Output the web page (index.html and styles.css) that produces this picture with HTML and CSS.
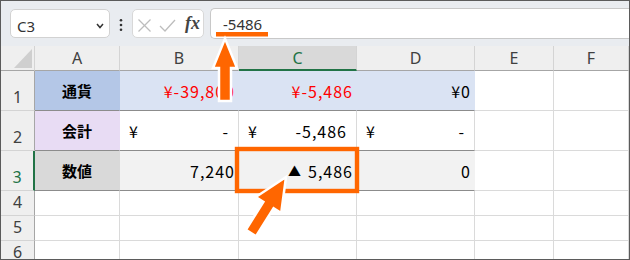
FILE: index.html
```html
<!DOCTYPE html>
<html lang="ja">
<head>
    <meta charset="UTF-8">
    <title>表示形式の比較</title>
    <link rel="stylesheet" href="styles.css">
</head>
<body>
    <div class="frame">
        <div class="sheet">
            <!-- Name box, buttons and formula bar -->
            <div class="toolbar">
                <div class="namebox">
                    <span>C3</span>
                    <svg width="8" height="6" viewBox="0 0 8 6"><polyline points="1,1 4,4.5 7,1" fill="none" stroke="#333" stroke-width="1.5"/></svg>
                </div>
                <div class="menu-dots">
                    <svg width="4" height="29" viewBox="0 0 4 29">
                        <circle cx="2" cy="11.3" r="1.3" fill="#333"/>
                        <circle cx="2" cy="16" r="1.3" fill="#333"/>
                        <circle cx="2" cy="20.7" r="1.3" fill="#333"/>
                    </svg>
                </div>
                <div class="fx-buttons">
                    <svg width="44" height="27" viewBox="0 0 44 27">
                        <line x1="5.5" y1="9.5" x2="17.5" y2="21.5" stroke="#bdbdbd" stroke-width="1.3"/>
                        <line x1="17.5" y1="9.5" x2="5.5" y2="21.5" stroke="#bdbdbd" stroke-width="1.3"/>
                        <polyline points="27,16 32,21 42,10" fill="none" stroke="#bdbdbd" stroke-width="1.3"/>
                    </svg>
                    <span class="fx">fx</span>
                </div>
                <div class="formula">-5486</div>
            </div>

            <!-- Worksheet -->
            <div class="grid">
                <div class="corner">
                    <svg width="33" height="24" viewBox="0 0 33 24"><polygon points="13,22 31,22 31,3" fill="#cfcfcf"/></svg>
                </div>
                <div class="col-head">A</div>
                <div class="col-head">B</div>
                <div class="col-head active">C</div>
                <div class="col-head">D</div>
                <div class="col-head">E</div>
                <div class="col-head">F</div>

                <div class="row-head">1</div>
                <div class="cell table label currency">通貨</div>
                <div class="cell table num fill-blue red">¥-39,800</div>
                <div class="cell table num fill-blue red">¥-5,486</div>
                <div class="cell table num fill-blue">¥0</div>
                <div class="cell"></div>
                <div class="cell"></div>

                <div class="row-head">2</div>
                <div class="cell table label accounting">会計</div>
                <div class="cell table acct"><span>¥</span><span>-</span></div>
                <div class="cell table acct"><span>¥</span><span>-5,486</span></div>
                <div class="cell table acct"><span>¥</span><span>-</span></div>
                <div class="cell"></div>
                <div class="cell"></div>

                <div class="row-head active">3</div>
                <div class="cell table label number">数値</div>
                <div class="cell table num fill-grey">7,240</div>
                <div class="cell table num fill-grey"><span class="mark">▲</span>5,486</div>
                <div class="cell table num fill-grey">0</div>
                <div class="cell"></div>
                <div class="cell"></div>

                <div class="row-head">4</div>
                <div class="cell"></div><div class="cell"></div><div class="cell"></div>
                <div class="cell"></div><div class="cell"></div><div class="cell"></div>

                <div class="row-head">5</div>
                <div class="cell"></div><div class="cell"></div><div class="cell"></div>
                <div class="cell"></div><div class="cell"></div><div class="cell"></div>

                <div class="row-head">6</div>
                <div class="cell"></div><div class="cell"></div><div class="cell"></div>
                <div class="cell"></div><div class="cell"></div><div class="cell"></div>
            </div>
        </div>

        <!-- Orange call-outs drawn over the sheet -->
        <svg class="overlay" width="630" height="260" viewBox="0 0 630 260">
            <rect x="216" y="32" width="52" height="4.5" fill="#ff6600"/>
            <polygon points="225,38.5 237,68 231,68 231,101 219,101 219,68 213,68" fill="#ff6600" stroke="#fff" stroke-width="2.5"/>
            <rect x="237" y="149" width="120" height="42" fill="none" stroke="#ff6600" stroke-width="4.4"/>
            <polygon points="286,177 281.2,213 273.6,208.2 256.1,236.2 245.9,229.8 263.4,201.8 255.8,197" fill="#ff6600" stroke="#fff" stroke-width="2.5"/>
        </svg>
    </div>
</body>
</html>
```

FILE: styles.css
```css
/* Excel-like sheet with call-outs */
body {
    margin: 0;
}

.frame {
    position: relative;
    width: 630px;
    height: 260px;
}

.sheet {
    box-sizing: border-box;
    width: 630px;
    height: 260px;
    border: 1px solid #5b5b5b;
    overflow: hidden;
    background-color: #fff;
    font-family: "Noto Sans", sans-serif;
}

/* Toolbar */
.toolbar {
    display: flex;
    align-items: flex-start;
    height: 45px;
    padding-left: 9px;
    background-color: #e9ecf0;
}

.namebox {
    box-sizing: border-box;
    width: 100px;
    height: 29px;
    margin-top: 8px;
    padding: 4px 5px 0 6px;
    display: flex;
    align-items: center;
    justify-content: space-between;
    background-color: #fff;
    border: 1px solid #d2d2d2;
    border-radius: 5px;
    font-size: 15px;
    color: #333;
}

.menu-dots {
    width: 22px;
    height: 29px;
    margin-top: 8px;
    display: flex;
    justify-content: center;
}

.fx-buttons {
    box-sizing: border-box;
    width: 72px;
    height: 29px;
    margin-top: 8px;
    display: flex;
    align-items: center;
    background-color: #fff;
    border: 1px solid #d8d8d8;
    border-radius: 5px;
}

.fx {
    margin-left: 8px;
    font-family: "Liberation Serif", serif;
    font-style: italic;
    font-weight: bold;
    font-size: 18px;
    color: #444;
}

.formula {
    flex: 1;
    box-sizing: border-box;
    height: 31px;
    margin-top: 7px;
    margin-left: 6px;
    padding-left: 12px;
    display: flex;
    align-items: center;
    background-color: #fff;
    border: 1px solid #c8c8c8;
    border-right: none;
    border-radius: 5px 0 0 5px;
    font-size: 15px;
    color: #333;
}

/* Grid */
.grid {
    display: grid;
    grid-template-columns: 34px 85px 119px 118px 118px 79px 1fr;
    grid-template-rows: 25px 40px 40px 40px 25px 25px 25px;
}

.grid > div {
    box-sizing: border-box;
}

.corner,
.col-head {
    background-color: #efefef;
    border-right: 1px solid #d4d4d4;
    border-bottom: 1px solid #a6a6a6;
}

.corner svg {
    display: block;
}

.col-head {
    display: flex;
    align-items: center;
    justify-content: center;
    font-size: 16px;
    color: #404040;
}

.col-head.active {
    background-color: #d9d9d9;
    color: #217346;
    border-bottom: 2px solid #217346;
}

.row-head {
    display: flex;
    align-items: flex-end;
    justify-content: center;
    padding-bottom: 4px;
    background-color: #efefef;
    border-right: 1px solid #a6a6a6;
    border-bottom: 1px solid #d4d4d4;
    font-size: 16px;
    line-height: 18px;
    color: #404040;
}

.row-head.active {
    color: #217346;
    border-right: 2px solid #217346;
}

.cell {
    display: flex;
    align-items: center;
    border-right: 1px solid #dadada;
    border-bottom: 1px solid #dadada;
    font-family: "Noto Sans CJK JP", sans-serif;
    font-size: 16px;
    letter-spacing: 1px;
    color: #000;
}

.cell.table {
    border-bottom-color: #8c8c8c;
}

.cell.label {
    justify-content: center;
    font-size: 15px;
    font-weight: bold;
    letter-spacing: 0;
    border-right-color: transparent;
}

.cell.num {
    justify-content: flex-end;
    padding-right: 3px;
}

.cell.acct {
    justify-content: space-between;
    padding: 0 9px 0 9px;
}

.mark {
    font-size: 13px;
    margin-right: 6px;
}

.currency {
    background-color: #b4c7e7;
}

.accounting {
    background-color: #e8dcf4;
}

.number {
    background-color: #d9d9d9;
}

.fill-blue {
    background-color: #dae3f3;
    border-right-color: transparent;
}

.fill-grey {
    background-color: #f2f2f2;
    border-right-color: transparent;
}

.red {
    color: #ff0000;
}

.overlay {
    position: absolute;
    left: 0;
    top: 0;
    pointer-events: none;
}
```
